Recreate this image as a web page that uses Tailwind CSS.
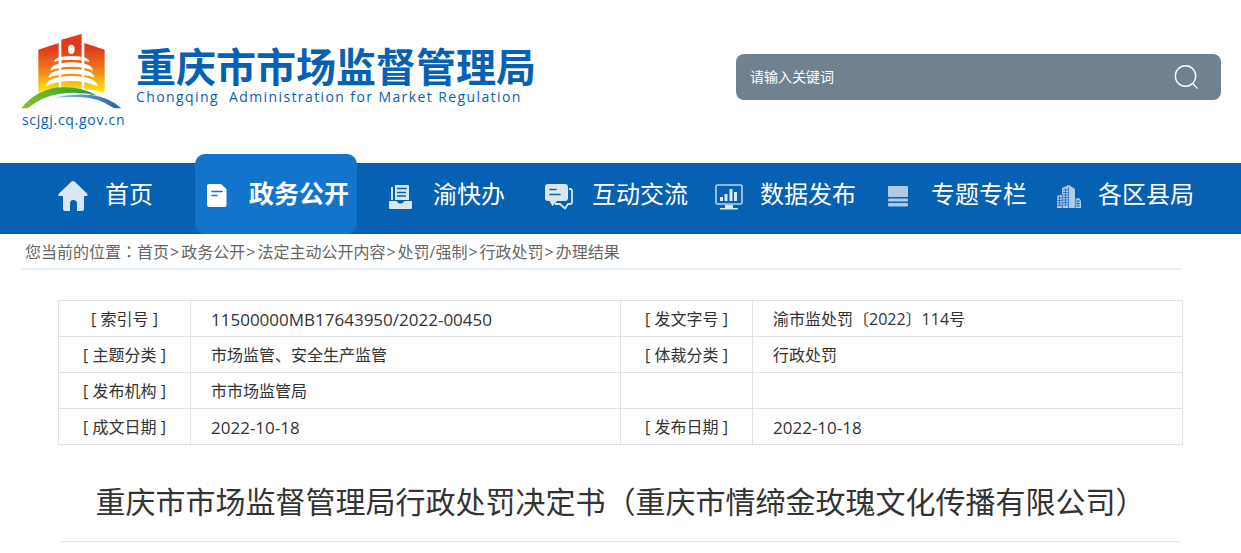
<!DOCTYPE html>
<html lang="zh-CN">
<head>
  <meta charset="UTF-8" />
  <meta name="viewport" content="width=device-width, initial-scale=1.0" />
  <title>重庆市市场监督管理局</title>
  <script src="https://cdn.jsdelivr.net/npm/@tailwindcss/browser@4"></script>
</head>
<body class="bg-white text-[#333] font-['Open_Sans','Noto_Sans_CJK_SC',sans-serif]">

  <!-- header -->
  <header class="flex items-start justify-between pl-5 pr-5 h-[163px]">
    <a href="#" class="flex text-[#0761b2]">
      <div class="pt-[33px] w-[104px]">
        <svg class="block w-[102px] h-[78px]" viewBox="30 24 306 234" aria-hidden="true">
          <defs>
            <linearGradient id="tower" x1="0" y1="27" x2="0" y2="200" gradientUnits="userSpaceOnUse">
              <stop offset="0.25" stop-color="#e0391d" />
              <stop offset="0.6" stop-color="#ec7a1c" />
              <stop offset="1" stop-color="#fbe80c" />
            </linearGradient>
            <linearGradient id="hill" x1="35" y1="0" x2="260" y2="0" gradientUnits="userSpaceOnUse">
              <stop offset="0" stop-color="#8cc021" />
              <stop offset="0.5" stop-color="#4fae2f" />
              <stop offset="1" stop-color="#25984a" />
            </linearGradient>
            <linearGradient id="river" x1="130" y1="0" x2="333" y2="0" gradientUnits="userSpaceOnUse">
              <stop offset="0" stop-color="#8fc4e6" />
              <stop offset="0.6" stop-color="#4a86c4" />
              <stop offset="1" stop-color="#2c5ca5" />
            </linearGradient>
          </defs>
          <path fill="url(#tower)" d="M85 74 L146 54 V193 Q112 194 85 203 Z M154 44 L215 27 V191 H154 Z M223 54 L284 74 V203 Q255 195 223 193 Z" />
          <ellipse cx="184" cy="73" rx="10" ry="14" fill="#fff" />
          <g fill="#fff">
            <path d="M132 110 Q135 94 184 93 Q236 94 238 110 Q215 104 184 104 Q154 104 132 110 Z" />
            <path d="M121 137 Q124 113 184 112 Q246 113 249 137 Q220 125 184 125 Q150 125 121 137 Z" />
            <path d="M115 158 Q120 133 184 132 Q250 133 254 158 Q222 146 184 146 Q145 146 115 158 Z" />
            <path d="M107 184 Q112 155 184 153 Q258 155 263 184 Q226 168 184 168 Q142 168 107 184 Z" />
          </g>
          <path fill="url(#hill)" d="M34 250 Q82 190 154 187 Q214 185 262 212 Q210 199 150 206 Q98 213 52 250 Z" />
          <path fill="url(#river)" d="M132 218 Q190 205 244 210 Q300 217 334 250 L312 250 Q264 215 200 216 Q165 215 132 218 Z" />
        </svg>
        <p class="pl-0.5 pt-px text-sm leading-4 tracking-wider whitespace-nowrap">scjgj.cq.gov.cn</p>
      </div>
      <div class="pt-[45px] pl-3">
        <h1 class="text-[40px] leading-[44px] font-bold whitespace-nowrap">重庆市市场监督管理局</h1>
        <p class="text-sm leading-4 tracking-widest whitespace-pre">Chongqing  Administration for Market Regulation</p>
      </div>
    </a>

    <form class="mt-[54px] flex items-center h-[46px] w-[485px] rounded-lg bg-[#70818f] pl-3.5 pr-[23px]">
      <input type="text" aria-label="请输入关键词" placeholder="请输入关键词"
             class="flex-1 min-w-0 bg-transparent text-sm text-white placeholder:text-white outline-none" />
      <button type="button" aria-label="搜索">
        <svg class="block size-6" viewBox="0 0 24 24" fill="none" stroke="#fff" stroke-width="1.4">
          <circle cx="11.5" cy="11" r="10.2" />
          <path d="M18.5 18.5 L23.5 23.5" />
        </svg>
      </button>
    </form>
  </header>

  <!-- main nav -->
  <nav class="bg-[#0761b2] h-[71px] text-2xl text-white whitespace-nowrap">
    <ul class="grid grid-cols-[144fr_184fr_159fr_168fr_171fr_167fr_197fr] h-20 pl-[51px] -translate-y-[9px]">
      <li>
        <a href="#" class="flex items-center gap-4 h-20 pl-1.5">
          <svg class="w-8 h-8 mt-1" viewBox="0 0 32 32" fill="#dae7f3">
            <path d="M16 1 Q17 1 18 2 L30 13.500 Q31.500 16 29 16 H27 V29 Q27 31 25 31 H20 V23.500 Q20 20 16 20 Q13 20 13 23.500 V31 H8 Q6 31 6 29 V16 H3 Q0 16 2 13.500 L14 2 Q15 1 16 1 Z" />
          </svg>
          <span>首页</span>
        </a>
      </li>
      <li>
        <a href="#" class="flex items-center gap-4 h-20 w-fit pl-1.5 pr-2 rounded-[10px] bg-[#1374cb] font-bold text-[25px]">
          <svg class="w-8 h-8 mt-1" viewBox="0 0 32 32">
            <path fill="#fff" d="M8 4 H20 L25.500 9 V25 Q25.500 27 23.500 27 H8 Q6 27 6 25 V6 Q6 4 8 4 Z" />
            <path stroke="#1374cb" stroke-width="1.5" stroke-linecap="round" d="M11 11.500 H21 M11 15.500 H16" />
          </svg>
          <span>政务公开</span>
        </a>
      </li>
      <li>
        <a href="#" class="flex items-center gap-4 h-20 pl-1.5">
          <svg class="w-8 h-8 mt-1" viewBox="0 0 32 32" fill="#dae7f3">
            <path d="M6 7 H8 V20 H6 Z M10 5 H23 Q24 5 24 6 V20 H10 Z" />
            <path d="M5 21 H10 Q12 21 12.500 22 Q13 23.500 15 23.500 Q18 23.500 18.500 22 Q19 21 21 21 H26 Q27 21 27 22 V28 Q27 29 26 29 H5 Q4 29 4 28 V22 Q4 21 5 21 Z" />
            <path stroke="#0761b2" stroke-width="1.3" d="M12 8.500 H22 M12 12.500 H21 M12 16 H21" />
          </svg>
          <span>渝快办</span>
        </a>
      </li>
      <li>
        <a href="#" class="flex items-center gap-4 h-20 pl-1.5">
          <svg class="w-8 h-8 mt-1" viewBox="0 0 32 32">
            <path fill="#dae7f3" d="M4 4 H21 Q24 4 24 7 V18 Q24 21 21 21 H13 L8.500 26 L6 22 V21 H4 Q1 21 1 18 V7 Q1 4 4 4 Z" />
            <path fill="none" stroke="#dae7f3" stroke-width="1.8" stroke-linejoin="round" d="M25 9 H26 Q28 9 28 11 V22 Q28 24 26 24 H24 L21 28.500 L16 24 H11" />
            <path stroke="#0761b2" stroke-width="1.6" stroke-linecap="round" d="M6 9.500 H12 M6 14.500 H16" />
          </svg>
          <span>互动交流</span>
        </a>
      </li>
      <li>
        <a href="#" class="flex items-center gap-4 h-20 pl-1.5">
          <svg class="w-8 h-8 mt-1" viewBox="0 0 32 32" fill="#dae7f3">
            <rect x="4" y="5" width="26" height="19" rx="1.500" fill="none" stroke="#bcd3e9" stroke-width="1.600" />
            <path d="M8 17 H11 V21 H8 Z M12.500 14 H15.500 V21 H12.500 Z M17.500 9 H20.500 V21 H17.500 Z M22 12 H25 V21 H22 Z M13 25 H21 V28 H26 V29.500 H8 V28 H13 Z" />
          </svg>
          <span>数据发布</span>
        </a>
      </li>
      <li>
        <a href="#" class="flex items-center gap-4 h-20 pl-1.5">
          <svg class="w-8 h-8 mt-1" viewBox="0 0 32 32" fill="#b0cbe5">
            <rect x="5" y="6" width="20" height="11" rx="1" />
            <rect x="5" y="18.500" width="20" height="3" rx="1" />
            <rect x="5" y="23" width="20" height="3.500" rx="1" />
          </svg>
          <span>专题专栏</span>
        </a>
      </li>
      <li>
        <a href="#" class="flex items-center gap-4 h-20 pl-1.5">
          <svg class="w-8 h-8 mt-1" viewBox="0 0 32 32">
            <path fill="#b0cbe5" d="M12 8 L19 5 L25 9 V28 H12 Z M7 16 L12 14.500 V28 H7 Z M25 19 L29 18 L31 21 V28 H25 Z" />
            <path stroke="#0761b2" stroke-width="0.7" fill="none" d="M13 10 H18 M13 12.500 H18 M13 15 H18 M13 17.500 H18 M13 20 H18 M13 22.500 H18 M13 25 H18 M18.500 7 V28 M7 18 H12 M7 20.500 H12 M7 23 H12 M7 25.500 H12 M12.300 14 V28 M25.300 19 V28 M26 21 H30 M26 23.500 H30 M26 26 H30 M15.500 8 V26 M9.500 16 V26 M28 20 V27" />
          </svg>
          <span>各区县局</span>
        </a>
      </li>
    </ul>
  </nav>

  <!-- breadcrumb -->
  <div class="ml-[21px] mr-[60px] pl-1 h-9 border-b-2 border-[#e3effa] text-base leading-[34px] text-[#666] whitespace-nowrap">
    您当前的位置<span lang="zh-TW" class="font-['Noto_Sans_CJK_TC',sans-serif]">：</span><a href="#">首页</a><span class="pl-px pr-0.5">&gt;</span><a href="#">政务公开</a><span class="pl-px pr-0.5">&gt;</span><a href="#">法定主动公开内容</a><span class="pl-px pr-0.5">&gt;</span><a href="#">处罚/强制</a><span class="pl-px pr-0.5">&gt;</span><a href="#">行政处罚</a><span class="pl-px pr-0.5">&gt;</span><a href="#">办理结果</a>
  </div>

  <main class="ml-[58px] mr-[58px] pt-[30px]">
    <table class="w-full table-fixed border-collapse text-base leading-[33px] [&_th]:font-normal [&_th]:border [&_td]:border [&_th]:border-[#e2e2e2] [&_td]:border-[#e2e2e2] [&_th]:px-0 [&_th]:pt-0.5 [&_th]:pb-0 [&_td]:pt-0.5 [&_td]:pb-0 [&_td]:pl-5 [&_td]:pr-0">
      <colgroup>
        <col class="w-[132px]" />
        <col />
        <col class="w-[132px]" />
        <col />
      </colgroup>
      <tbody>
        <tr class="h-9">
          <th scope="row">[ 索引号 ]</th>
          <td class="text-[17px]">11500000MB17643950/2022-00450</td>
          <th scope="row">[ 发文字号 ]</th>
          <td>渝市监处罚〔2022〕114号</td>
        </tr>
        <tr class="h-9">
          <th scope="row">[ 主题分类 ]</th>
          <td>市场监管、安全生产监管</td>
          <th scope="row">[ 体裁分类 ]</th>
          <td>行政处罚</td>
        </tr>
        <tr class="h-9">
          <th scope="row">[ 发布机构 ]</th>
          <td>市市场监管局</td>
          <td></td>
          <td></td>
        </tr>
        <tr class="h-9">
          <th scope="row">[ 成文日期 ]</th>
          <td class="text-[17px]">2022-10-18</td>
          <th scope="row">[ 发布日期 ]</th>
          <td class="text-[17px]">2022-10-18</td>
        </tr>
      </tbody>
    </table>

    <h2 class="mt-[31px] mx-[3px] pb-[15px] border-b border-[#e2e2e2] text-center text-[30px] leading-12 whitespace-nowrap">重庆市市场监督管理局行政处罚决定书<span lang="zh-TW" class="font-['Noto_Sans_CJK_TC',sans-serif]">（</span>重庆市情缔金玫瑰文化传播有限公司<span lang="zh-TW" class="font-['Noto_Sans_CJK_TC',sans-serif]">）</span></h2>
  </main>

</body>
</html>
